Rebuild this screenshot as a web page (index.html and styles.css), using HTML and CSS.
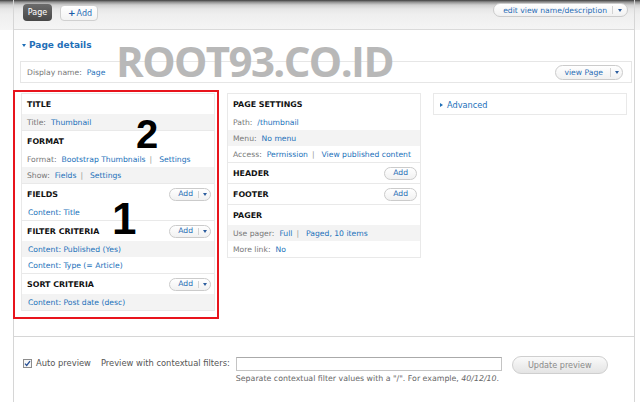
FILE: index.html
```html
<!DOCTYPE html>
<html>
<head>
<meta charset="utf-8">
<link rel="stylesheet" href="styles.css">
</head>
<body>
<div class="frame">
  <div class="topbar">
    <span class="tab-active">Page</span>
    <span class="tab-add"><span class="plus">+</span>Add</span>
    <span class="pill edit"><span class="pl">edit view name/description</span><span class="dd"></span></span>
  </div>
  <div class="main">
    <div class="details-title"><span class="tri-down"></span>Page details</div>
    <div class="display-name">
      <span><span class="lbl">Display name:</span><a href="#">Page</a></span>
      <span class="pill viewpage"><span class="pl">view Page</span><span class="dd"></span></span>
    </div>
    <div class="columns">
      <div class="col">
        <div class="bucket">
          <div class="bh">Title</div>
          <div class="row alt"><span class="lbl">Title:</span><a href="#">Thumbnail</a></div>
        </div>
        <div class="bucket">
          <div class="bh">Format</div>
          <div class="row"><span class="lbl">Format:</span><a href="#">Bootstrap Thumbnails</a><span class="sep">|</span><a href="#">Settings</a></div>
          <div class="row alt"><span class="lbl">Show:</span><a href="#">Fields</a><span class="sep">|</span><a href="#">Settings</a></div>
        </div>
        <div class="bucket">
          <div class="bh">Fields<span class="pill add"><span class="pl">Add</span><span class="dd"></span></span></div>
          <div class="row field"><a href="#">Content: Title</a></div>
        </div>
        <div class="bucket">
          <div class="bh">Filter criteria<span class="pill add"><span class="pl">Add</span><span class="dd"></span></span></div>
          <div class="row field alt"><a href="#">Content: Published (Yes)</a></div>
          <div class="row field"><a href="#">Content: Type (= Article)</a></div>
        </div>
        <div class="bucket">
          <div class="bh">Sort criteria<span class="pill add"><span class="pl">Add</span><span class="dd"></span></span></div>
          <div class="row field alt"><a href="#">Content: Post date (desc)</a></div>
        </div>
      </div>
      <div class="col">
        <div class="bucket">
          <div class="bh">Page settings</div>
          <div class="row"><span class="lbl">Path:</span><a href="#">/thumbnail</a></div>
          <div class="row alt"><span class="lbl">Menu:</span><a href="#">No menu</a></div>
          <div class="row"><span class="lbl">Access:</span><a href="#">Permission</a><span class="sep">|</span><a href="#">View published content</a></div>
        </div>
        <div class="bucket">
          <div class="bh">Header<span class="pill add single"><span class="pl">Add</span></span></div>
        </div>
        <div class="bucket">
          <div class="bh">Footer<span class="pill add single"><span class="pl">Add</span></span></div>
        </div>
        <div class="bucket">
          <div class="bh">Pager</div>
          <div class="row alt"><span class="lbl">Use pager:</span><a href="#">Full</a><span class="sep">|</span><a href="#">Paged, 10 items</a></div>
          <div class="row"><span class="lbl">More link:</span><a href="#">No</a></div>
        </div>
      </div>
      <div class="col">
        <div class="bucket">
          <div class="bh adv"><span class="tri-right"></span><a href="#">Advanced</a></div>
        </div>
      </div>
    </div>
  </div>
  <div class="preview">
    <label class="auto"><span class="cb"><svg width="9" height="9" viewBox="0 0 9 9"><rect x="0.5" y="0.5" width="8" height="8" fill="#f6f6f6" stroke="#8c8c8c"/><path d="M2 4.6 L3.7 6.4 L7 2.2" fill="none" stroke="#274f94" stroke-width="1.3"/></svg></span>Auto preview</label>
    <span class="plabel">Preview with contextual filters:</span>
    <div class="pfield">
      <input class="pinput" type="text">
      <div class="pdesc">Separate contextual filter values with a "/". For example, <em>40/12/10</em>.</div>
    </div>
    <button class="update">Update preview</button>
  </div>
</div>
<div class="watermark">ROOT93.CO.ID</div>
<div class="redbox"></div>
<div class="anno anno-2">2</div>
<div class="anno anno-1">1</div>
</body>
</html>
```
FILE: styles.css
```css
* { box-sizing: border-box; margin: 0; padding: 0; }
html, body { width: 640px; height: 402px; overflow: hidden; }
body {
  position: relative;
  font-family: "DejaVu Sans", Verdana, sans-serif;
  font-size: 7.65px;
  color: #333;
  background: #fff linear-gradient(#3d3d3d 0, #8f8f8f 2px, #d0d0d0 5px, #e6e6e6 9px, #eeeeee 14px, #f5f5f5 29px) no-repeat 0 0 / 100% 30px;
}
a { color: #2271ba; text-decoration: none; }

.frame {
  margin-left: 13px;
  width: 622px;
  height: 402px;
  border-left: 1px solid #d6d6d6;
  border-right: 1px solid #d6d6d6;
  display: flex;
  flex-direction: column;
}

/* top bar */
.topbar {
  flex: 0 0 30px;
  border-bottom: 1px solid #dadada;
  display: flex;
  align-items: flex-start;
  padding: 0 6px 0 9px;
}
.tab-active {
  margin-top: 4px;
  width: 29px;
  height: 17px;
  border-radius: 4px;
  background: linear-gradient(#6b6b6b, #474747);
  color: #fff;
  font-size: 8px;
  line-height: 17px;
  text-align: center;
}
.tab-add {
  margin: 5px 0 0 8px;
  width: 38px;
  height: 16px;
  border: 1px solid #d0d0d0;
  border-radius: 4px;
  background: linear-gradient(#ffffff, #f3f3f3);
  color: #2a6db5;
  font-size: 8px;
  line-height: 14px;
  padding-left: 7px;
}
.plus { font-weight: bold; color: #1b5ba6; margin-right: 1px; font-size: 9px; }

/* pill buttons */
.pill {
  display: inline-flex;
  align-items: stretch;
  border: 1px solid #cbcbcb;
  border-radius: 8px;
  background: linear-gradient(#ffffff, #f1f1f1);
  color: #2a6db5;
}
.pill .pl { display: flex; align-items: center; }
.pill .dd {
  display: flex;
  align-items: center;
  justify-content: center;
  border-left: 1px solid #d3d3d3;
  margin: 2px 0;
}
.pill .dd::after {
  content: "";
  border-left: 2.5px solid transparent;
  border-right: 2.5px solid transparent;
  border-top: 3px solid #2c5d9e;
}
.edit { margin: 3px 0 0 auto; height: 14px; }
.edit .pl { padding: 0 5px 0 9px; }
.edit .dd { width: 15px; }
.viewpage { height: 15px; margin-right: 8px; }
.viewpage .pl { padding: 0 7px 0 8px; }
.viewpage .dd { width: 12px; }
.add { height: 13px; border-radius: 7px; }
.add .pl { padding: 0 5px 0 8px; }
.add .dd { width: 12px; }
.add.single .pl { padding: 0 8px; }

/* main panel */
.main {
  flex: 0 0 307px;
  border-bottom: 1px solid #d6d6d6;
  padding: 8px 2px 0 6px;
  background: #fff;
}
.details-title {
  display: flex;
  align-items: center;
  padding-left: 2px;
  height: 14px;
  color: #1f6fb7;
  font-weight: bold;
  font-size: 9px;
}
.tri-down {
  width: 0; height: 0;
  border-left: 2.5px solid transparent;
  border-right: 2.5px solid transparent;
  border-top: 3px solid #1f6fb7;
  margin-right: 3px;
}
.display-name {
  margin-top: 9px;
  height: 22px;
  border: 1px solid #e6e6e6;
  display: flex;
  align-items: center;
  justify-content: space-between;
  padding-left: 6px;
}
.lbl { color: #777; margin-right: 5px; }
.sep { color: #999; margin: 0 7px 0 4px; }

.columns {
  margin: 10px 0 0 1px;
  display: grid;
  grid-template-columns: 194px 194px 194px;
  column-gap: 12px;
  align-items: start;
}
.col {
  border: 1px solid #e9e9e9;
  border-top: none;
  background: #fff;
}
.bucket { border-top: 1px solid #e9e9e9; }
.bh {
  height: 20px;
  padding: 2px 3px 0 5px;
  line-height: 18px;
  display: flex;
  align-items: center;
  justify-content: space-between;
  text-transform: uppercase;
  font-weight: bold;
  font-size: 7.9px;
  color: #111;
}
.bh .pill { font-weight: normal; text-transform: none; font-size: 7.65px; margin-top: -2px; }
.bh.adv {
  justify-content: flex-start;
  text-transform: none;
  font-weight: normal;
  font-size: 8.2px;
  padding-left: 6px;
}
.tri-right {
  width: 0; height: 0;
  border-top: 2.5px solid transparent;
  border-bottom: 2.5px solid transparent;
  border-left: 3px solid #1f6fb7;
  margin-right: 4px;
}
.row {
  height: 16px;
  padding: 2px 0 0 5px;
  line-height: 14px;
  white-space: nowrap;
}
.row.alt { background: #f3f3f3; }
.row.field { padding-left: 6px; }

/* preview */
.preview {
  flex: 1;
  display: flex;
  align-items: flex-start;
  padding: 19px 0 0 9px;
  font-size: 8.35px;
  color: #555;
  background: #fff;
}
.auto { display: flex; align-items: center; height: 14px; }
.cb { display: flex; margin-right: 4px; }
.plabel { line-height: 14px; margin-left: 10px; }
.pfield { margin-left: 6px; display: flex; flex-direction: column; }
.pinput {
  margin-top: 1px;
  width: 266px;
  height: 14px;
  border: 1px solid #c4c4c4;
  border-top-color: #aaa;
  background: #fff;
}
.pdesc {
  margin-top: 2px;
  line-height: 11px;
  font-size: 7.85px;
  color: #666;
  white-space: nowrap;
}
.update {
  margin-left: 10px;
  width: 96px;
  height: 18px;
  border: 1px solid #cfcfcf;
  border-radius: 9px;
  background: linear-gradient(#fafafa, #e4e4e4);
  color: #8a8a8a;
  font-family: "DejaVu Sans", Verdana, sans-serif;
  font-size: 8.1px;
}

/* overlays */
.watermark {
  position: absolute;
  left: 116px;
  top: 40px;
  font-family: "Open Sans", sans-serif;
  font-weight: bold;
  font-size: 42px;
  line-height: 1;
  letter-spacing: -1.6px;
  color: #b8b8b8;
  white-space: nowrap;
}
.redbox {
  position: absolute;
  left: 13px;
  top: 90px;
  width: 206px;
  height: 229px;
  border: 2px solid #e8141c;
}
.anno {
  position: absolute;
  font-family: "Liberation Sans", Arial, sans-serif;
  font-weight: bold;
  line-height: 1;
  color: #000;
}
.anno-2 { left: 136px; top: 114px; font-size: 40px; }
.anno-1 { left: 112px; top: 197px; font-size: 44px; }
```
